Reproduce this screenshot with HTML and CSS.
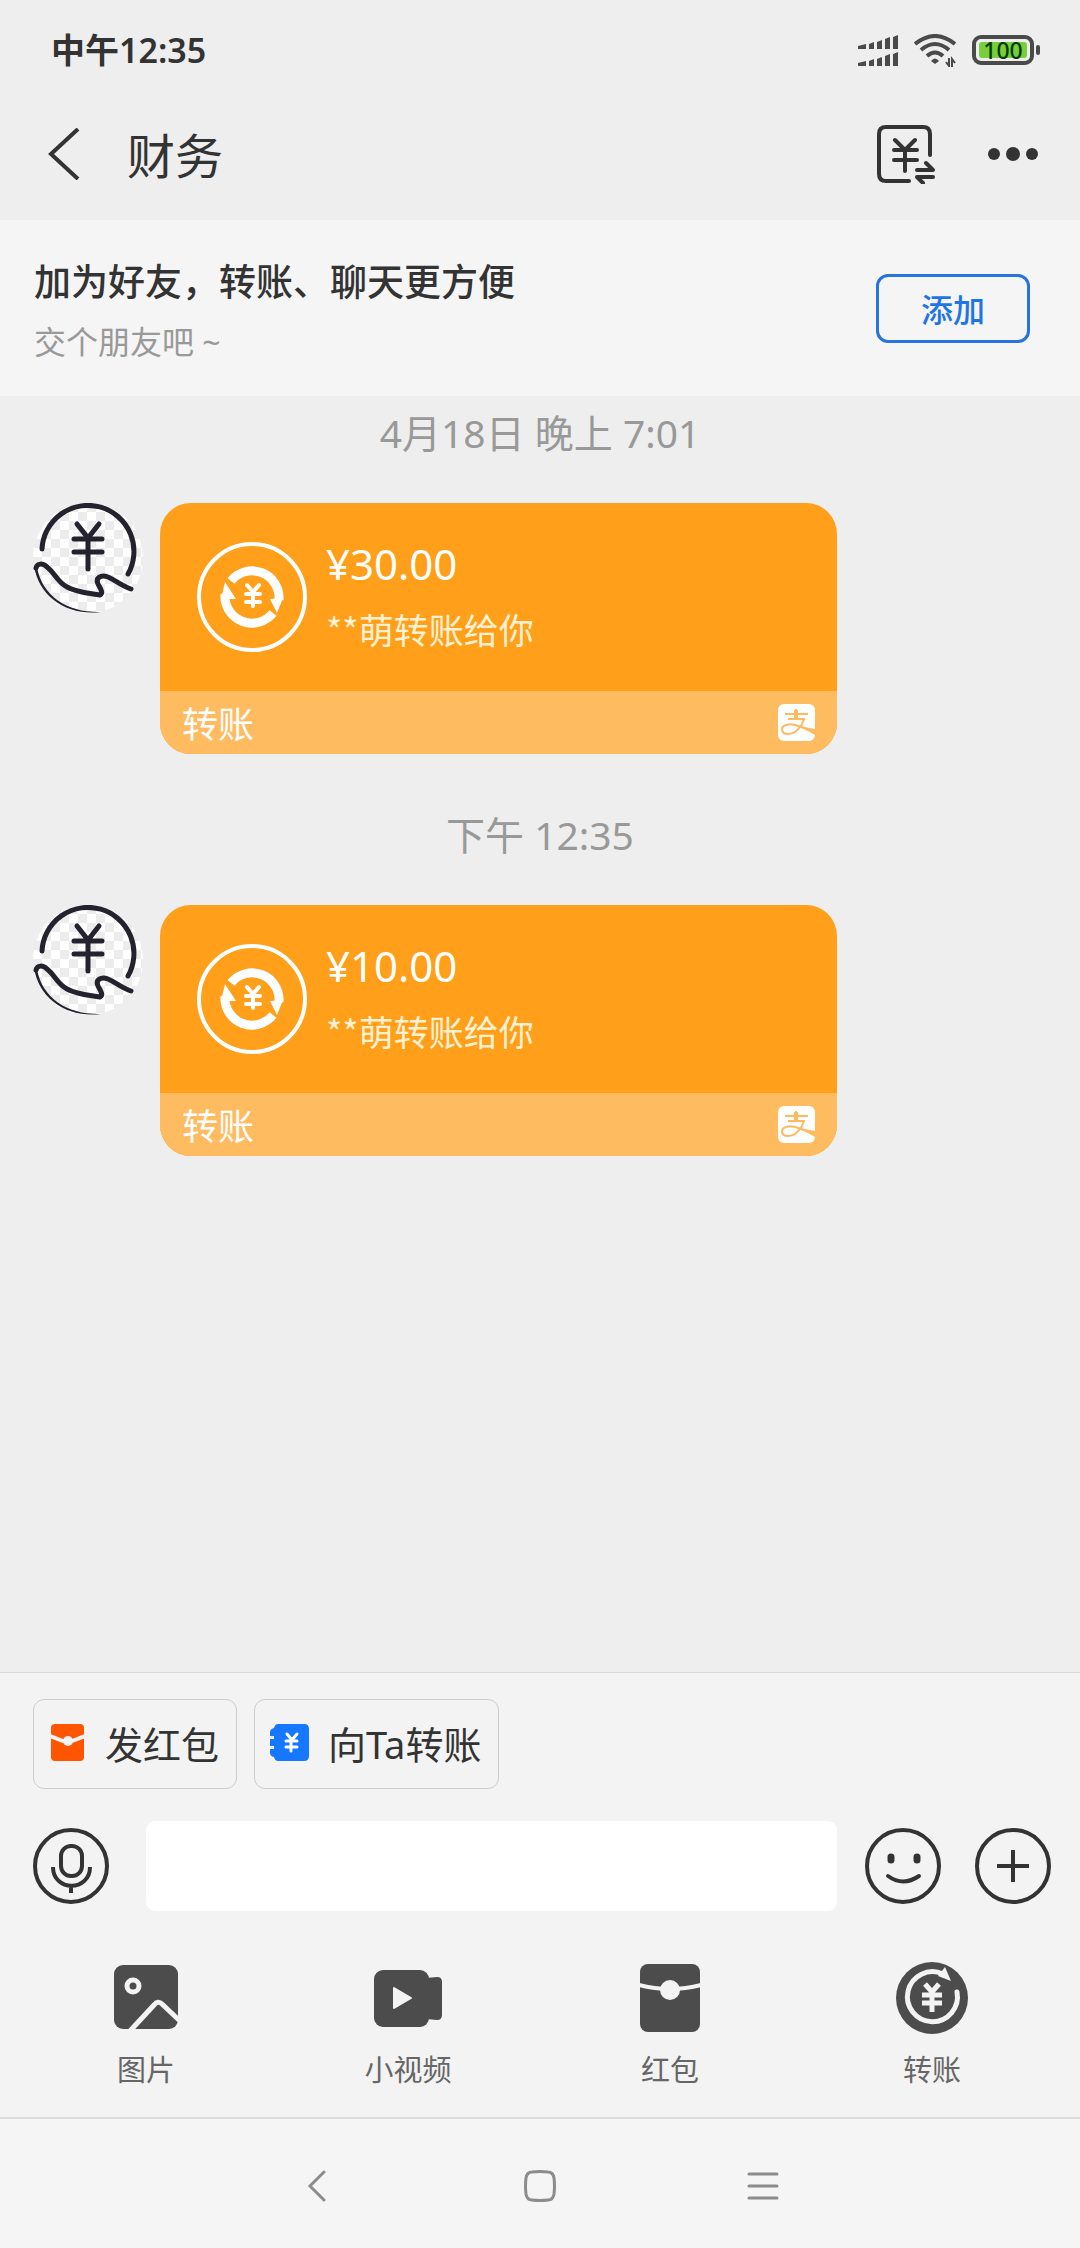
FILE: index.html
```html
<!DOCTYPE html>
<html lang="zh-CN">
<head>
<meta charset="utf-8">
<meta name="viewport" content="width=device-width, initial-scale=1">
<title>财务</title>
<link rel="stylesheet" href="styles.css">
</head>
<body>
<svg width="0" height="0" class="defs" aria-hidden="true">
  <defs>
    <pattern id="checker" width="18" height="18" patternUnits="userSpaceOnUse">
      <rect width="18" height="18" fill="#fff"/>
      <rect width="9" height="9" fill="#ececec"/>
      <rect x="9" y="9" width="9" height="9" fill="#ececec"/>
    </pattern>
    <symbol id="avatar" viewBox="0 0 110 110">
      <circle cx="55" cy="55" r="55" fill="url(#checker)"/>
      <g fill="none" stroke="#23222e" stroke-width="5" stroke-linecap="round" stroke-linejoin="round">
        <path d="M9 46A46 46 0 1 1 95 71"/>
        <path d="M44 21l11 14 11-14M41 36h28M41 49h28M55 35v31"/>
        <path d="M3 65C4 60 10 60 14 64C22 70 24 79 34 84C45 90 56 90 67 92C71 90 67 85 65 81C62 75 68 71 75 74C84 78 89 83 98 86"/>
      </g>
      <path d="M1 63C6 94 34 113 68 109C36 110 9 94 4 64Z" fill="#23222e"/>
    </symbol>
    <symbol id="transfer" viewBox="0 0 110 110">
      <circle cx="55" cy="55" r="53" fill="none" stroke="#fff" stroke-width="4"/>
      <g fill="none" stroke="#fff" stroke-width="9">
        <path d="M34 39A27 27 0 0 1 82 58"/>
        <path d="M76 71A27 27 0 0 1 28 52"/>
      </g>
      <path d="M73 57L86 56 80 71ZM28 40L39 57 24 57Z" fill="#fff"/>
      <path d="M50 43l6 7 6-7M49 52h14M49 60h14M56 50v14" fill="none" stroke="#fff" stroke-width="4" stroke-linecap="round"/>
    </symbol>
    <symbol id="alipay" viewBox="0 0 37 37">
      <rect width="37" height="37" rx="6" fill="#fff"/>
      <path d="M7 10H30M10 15H27M18 5V15M26 15C24 22 18 30 10 30C3 30 2 23 8 21C15 18 24 24 37 28" fill="none" stroke="#ffb95e" stroke-width="2"/>
      <path d="M18 6V15" stroke="#ffb95e" stroke-width="4"/>
      <path d="M21 22L37 25V31Z" fill="#ffb95e"/>
    </symbol>
  </defs>
</svg>

<div class="status">
  <time class="clock">中午12:35</time>
  <div class="status-icons">
    <svg width="40" height="31" viewBox="0 0 40 31" fill="#4a4a4a" aria-hidden="true">
      <path d="M0 14V11L8 9v5zM11 14V9l5-2v7zM19 14V7l5-2v9zM27 14V4l5-2v12zM35 14V2l5-2v14z"/>
      <path d="M0 31V28L8 26v5zM11 31V26l5-2v7zM19 31V24l5-2v9zM27 31V21l5-2v12zM35 31V19l5-2v14z"/>
    </svg>
    <svg width="42" height="33" viewBox="0 0 42 33" fill="none" stroke="#4a4a4a" stroke-width="4" aria-hidden="true">
      <path d="M1 10Q21-6 41 10M7 16Q21 4 35 16M13 22Q21 15 29 22"/>
      <path d="M17 27Q21 22 25 27L21 30Z" fill="#4a4a4a" stroke="none"/>
      <path d="M35 24v8l-3-4M38 33v-8l3 4" stroke-width="2"/>
    </svg>
    <div class="battery"><span>100</span></div>
  </div>
</div>

<header class="topbar">
  <button class="icon-btn" aria-label="返回">
    <svg width="32" height="52" viewBox="0 0 32 52" fill="none" stroke="#333" stroke-width="4"><path d="M30 1L3 26 30 51"/></svg>
  </button>
  <h1>财务</h1>
  <button class="icon-btn" aria-label="账单">
    <svg width="58" height="60" viewBox="0 0 58 60" fill="none" stroke="#333" stroke-width="4" stroke-linecap="round" stroke-linejoin="round">
      <path d="M53 31V10Q53 3 46 3H9Q2 3 2 10V50Q2 57 9 57H32"/>
      <path d="M18 16l10 10 10-10M17 26h23M17 36h23M28 26v21M40 46H56L49 39M56 53H40L46 59"/>
    </svg>
  </button>
  <button class="icon-btn" aria-label="更多">
    <svg width="50" height="16" viewBox="0 0 50 16" fill="#333"><circle cx="6" cy="8" r="6"/><circle cx="25" cy="8" r="7"/><circle cx="44" cy="8" r="6"/></svg>
  </button>
</header>

<section class="notice">
  <div>
    <h2>加为好友，转账、聊天更方便</h2>
    <p>交个朋友吧 ~</p>
  </div>
  <button class="add">添加</button>
</section>

<main class="chat">
  <time class="stamp">4月18日 晚上 7:01</time>
  <article class="message">
    <svg class="avatar" role="img" aria-label="头像"><use href="#avatar"/></svg>
    <a class="card" href="#">
      <span class="card-body">
        <svg class="card-icon" aria-hidden="true"><use href="#transfer"/></svg>
        <span class="card-text"><span class="amount">¥30.00</span><span class="memo">**萌转账给你</span></span>
      </span>
      <span class="card-foot">转账<svg class="brand" aria-hidden="true"><use href="#alipay"/></svg></span>
    </a>
  </article>
  <time class="stamp">下午 12:35</time>
  <article class="message">
    <svg class="avatar" role="img" aria-label="头像"><use href="#avatar"/></svg>
    <a class="card" href="#">
      <span class="card-body">
        <svg class="card-icon" aria-hidden="true"><use href="#transfer"/></svg>
        <span class="card-text"><span class="amount">¥10.00</span><span class="memo">**萌转账给你</span></span>
      </span>
      <span class="card-foot">转账<svg class="brand" aria-hidden="true"><use href="#alipay"/></svg></span>
    </a>
  </article>
</main>

<footer class="composer">
  <div class="chips">
    <button class="chip chip-packet">
      <svg width="33" height="37" viewBox="0 0 33 37" aria-hidden="true">
        <rect width="33" height="37" rx="4" fill="#ff5500"/>
        <path d="M-1 12L12 17H21L34 12" fill="none" stroke="#f3f3f3" stroke-width="4"/>
        <circle cx="17" cy="17" r="5" fill="#f3f3f3"/>
      </svg>发红包
    </button>
    <button class="chip chip-transfer">
      <svg width="39" height="37" viewBox="0 0 39 37" aria-hidden="true">
        <path d="M8 0H34Q39 0 39 5V32Q39 37 34 37H8Q5 37 4 33Q0 32 0 29V25H4V22H0V15H4V12H0V8Q0 5 4 4Q5 0 8 0Z" fill="#1677ff"/>
        <path d="M17 10l5 6 5-6M16 17h11M16 23h11M21 16v11" fill="none" stroke="#fff" stroke-width="3" stroke-linecap="round"/>
      </svg>向Ta转账
    </button>
  </div>
  <div class="entry">
    <button class="icon-btn" aria-label="语音">
      <svg width="77" height="77" viewBox="0 0 77 77" fill="none" stroke="#333" stroke-width="4">
        <circle cx="38" cy="38" r="36"/><rect x="28" y="18" width="21" height="30" rx="10"/>
        <path d="M20 39C20 64 57 64 57 39M38 58v7"/>
      </svg>
    </button>
    <input type="text" aria-label="消息">
    <button class="icon-btn" aria-label="表情">
      <svg width="77" height="77" viewBox="0 0 77 77" fill="none" stroke="#333" stroke-width="4" stroke-linecap="round">
        <circle cx="38" cy="38" r="36"/><path d="M23 48Q38 59 54 48"/>
        <path d="M26 29v3M52 29v3" stroke-width="7"/>
      </svg>
    </button>
    <button class="icon-btn" aria-label="更多功能">
      <svg width="77" height="77" viewBox="0 0 77 77" fill="none" stroke="#333" stroke-width="4">
        <circle cx="38" cy="38" r="36"/><path d="M22 38h32M38 22v32"/>
      </svg>
    </button>
  </div>
  <div class="tools">
    <button class="tool">
      <svg width="72" height="72" viewBox="0 0 72 72" aria-hidden="true">
        <rect x="4" y="3" width="64" height="64" rx="9" fill="#4c4c4c"/>
        <circle cx="23" cy="24" r="6" fill="none" stroke="#f3f3f3" stroke-width="5"/>
        <path d="M19 70L44 43Q48 38 52 42L70 59" fill="none" stroke="#f3f3f3" stroke-width="5"/>
      </svg>图片
    </button>
    <button class="tool">
      <svg width="72" height="72" viewBox="0 0 72 72" aria-hidden="true">
        <rect x="2" y="8" width="55" height="57" rx="9" fill="#4c4c4c"/>
        <path d="M54 16L65 15Q70 15 70 20V53Q70 58 65 58L54 57Z" fill="#4c4c4c"/>
        <path d="M22 26V46L39 36Z" fill="#f3f3f3" stroke="#f3f3f3" stroke-width="2" stroke-linejoin="round"/>
      </svg>小视频
    </button>
    <button class="tool">
      <svg width="72" height="72" viewBox="0 0 72 72" aria-hidden="true">
        <rect x="6" y="2" width="60" height="68" rx="8" fill="#4c4c4c"/>
        <path d="M5 23Q36 31 67 23" fill="none" stroke="#f3f3f3" stroke-width="4"/>
        <circle cx="36" cy="28" r="10" fill="#f3f3f3"/>
      </svg>红包
    </button>
    <button class="tool">
      <svg width="72" height="72" viewBox="0 0 72 72" aria-hidden="true">
        <circle cx="36" cy="36" r="36" fill="#4c4c4c"/>
        <path d="M61 30A25 25 0 1 1 47 12" fill="none" stroke="#f3f3f3" stroke-width="5" stroke-linecap="round"/>
        <path d="M49 5L55 19 42 14Z" fill="#f3f3f3"/>
        <path d="M29 22l7 8 7-8M26 33h20M26 41h20M36 29v21" fill="none" stroke="#f3f3f3" stroke-width="5"/>
      </svg>转账
    </button>
  </div>
</footer>

<nav class="sysnav" aria-label="系统导航">
  <button class="icon-btn" aria-label="后退"><svg width="32" height="32" viewBox="0 0 32 32"><path d="M23 2L9 16 23 30"/></svg></button>
  <button class="icon-btn" aria-label="主页"><svg width="32" height="32" viewBox="0 0 32 32"><path d="M8 2Q16 1 24 2Q29 2 30 8Q31 16 30 24Q29 30 24 30Q16 31 8 30Q3 30 2 24Q1 16 2 8Q3 2 8 2Z"/></svg></button>
  <button class="icon-btn" aria-label="最近任务"><svg width="32" height="32" viewBox="0 0 32 32"><path d="M2 4H30M2 16H30M2 28H30"/></svg></button>
</nav>
</body>
</html>
```
FILE: styles.css
```css
* {
  box-sizing: border-box;
  margin: 0;
}

body {
  display: flex;
  flex-direction: column;
  min-height: 100vh;
  background: #eee;
  color: #333;
  font-family: "Noto Sans", "Noto Sans CJK SC", sans-serif;
}

svg {
  display: block;
  flex: none;
}

button {
  padding: 0;
  border: 0;
  background: none;
  color: inherit;
  font: inherit;
}

.defs {
  position: absolute;
}

.icon-btn {
  flex: none;
}

/* Status bar */
.status {
  display: flex;
  align-items: center;
  justify-content: space-between;
  height: 88px;
  padding: 12px 40px 0 51px;
}

.clock {
  font-size: 34px;
  font-weight: 600;
  line-height: 44px;
}

.status-icons {
  display: flex;
  align-items: center;
  gap: 16px;
}

.battery {
  position: relative;
  width: 62px;
  height: 30px;
  margin-right: 6px;
  padding: 3px;
  border: 4px solid #4a4a4a;
  border-radius: 9px;
}

.battery::after {
  content: "";
  position: absolute;
  top: 6px;
  right: -10px;
  width: 4px;
  height: 10px;
  border-radius: 2px;
  background: #4a4a4a;
}

.battery span {
  display: block;
  border-radius: 3px;
  background: #76cf3b;
  color: #0b3a00;
  font-size: 23px;
  font-weight: 500;
  line-height: 16px;
  text-align: center;
}

/* Title bar */
.topbar {
  display: flex;
  align-items: center;
  height: 132px;
  padding: 0 42px 0 48px;
}

.topbar h1 {
  flex: 1;
  padding: 4px 0 0 47px;
  font-size: 48px;
  font-weight: 400;
  line-height: 64px;
}

.topbar .icon-btn + .icon-btn {
  margin-left: 53px;
}

/* Add-friend notice */
.notice {
  display: flex;
  align-items: center;
  justify-content: space-between;
  height: 176px;
  padding: 0 50px 0 34px;
  background: #f5f5f5;
}

.notice > div {
  padding-top: 8px;
}

.notice h2 {
  font-size: 37px;
  font-weight: 500;
  line-height: 60px;
}

.notice p {
  color: #999;
  font-size: 32px;
  line-height: 60px;
}

.add {
  width: 154px;
  height: 69px;
  border: 3px solid #2873dc;
  border-radius: 12px;
  color: #1f74e6;
  font-size: 32px;
  font-weight: 500;
}

/* Conversation */
.chat {
  display: flex;
  flex: 1;
  flex-direction: column;
  padding: 14px 33px;
}

.stamp {
  padding-bottom: 47px;
  color: #999;
  font-size: 39px;
  line-height: 46px;
  text-align: center;
}

.message {
  display: flex;
  align-items: flex-start;
  gap: 17px;
  margin-bottom: 58px;
}

.avatar {
  width: 110px;
  height: 110px;
}

.card {
  display: block;
  flex: 0 1 677px;
  overflow: hidden;
  border-radius: 31px;
  background: #ff9f1a;
  color: #fff;
  text-decoration: none;
}

.card-body {
  display: flex;
  align-items: center;
  gap: 19px;
  height: 188px;
  padding: 0 37px;
}

.card-icon {
  width: 110px;
  height: 110px;
}

.card-text {
  display: flex;
  flex-direction: column;
}

.amount {
  font-size: 42px;
  line-height: 64px;
}

.memo {
  color: #fff1d2;
  font-family: "Noto Sans CJK SC", sans-serif;
  font-size: 35px;
  line-height: 66px;
}

.card-foot {
  display: flex;
  align-items: center;
  justify-content: space-between;
  height: 63px;
  padding: 0 22px;
  background: #ffbb60;
  font-size: 36px;
}

.brand {
  width: 37px;
  height: 37px;
}

/* Composer */
.composer {
  border-top: 1px solid #d8d8d8;
  background: #f3f3f3;
}

.chips {
  display: flex;
  gap: 17px;
  padding: 26px 33px 0;
}

.chip {
  display: flex;
  align-items: center;
  height: 90px;
  padding: 0 17px 4px;
  border: 1px solid #ccc;
  border-radius: 11px;
  font-size: 38px;
}

.chip-packet {
  gap: 21px;
}

.chip-transfer {
  padding-left: 15px;
  gap: 19px;
}

.entry {
  display: flex;
  align-items: center;
  padding: 32px 28px 0 33px;
}

.entry input {
  flex: 1;
  min-width: 0;
  height: 90px;
  margin: 0 28px 0 36px;
  padding: 0 20px;
  border: 0;
  border-radius: 9px;
  background: #fff;
  font: inherit;
  font-size: 38px;
}

.entry .icon-btn + .icon-btn {
  margin-left: 33px;
}

.tools {
  display: grid;
  grid-template-columns: repeat(4, 1fr);
  padding: 51px 17px 26px 15px;
}

.tool {
  display: flex;
  flex-direction: column;
  align-items: center;
  gap: 15px;
  color: #666;
  font-size: 29px;
  line-height: 42px;
}

/* System navigation */
.sysnav {
  display: grid;
  grid-template-columns: repeat(3, 1fr);
  justify-items: center;
  align-items: center;
  height: 131px;
  padding: 4px 205px 0;
  border-top: 2px solid #dcdcdc;
  background: #f5f5f5;
}

.sysnav svg {
  fill: none;
  stroke: #8c8c8c;
  stroke-width: 3;
  stroke-linecap: round;
}
```
